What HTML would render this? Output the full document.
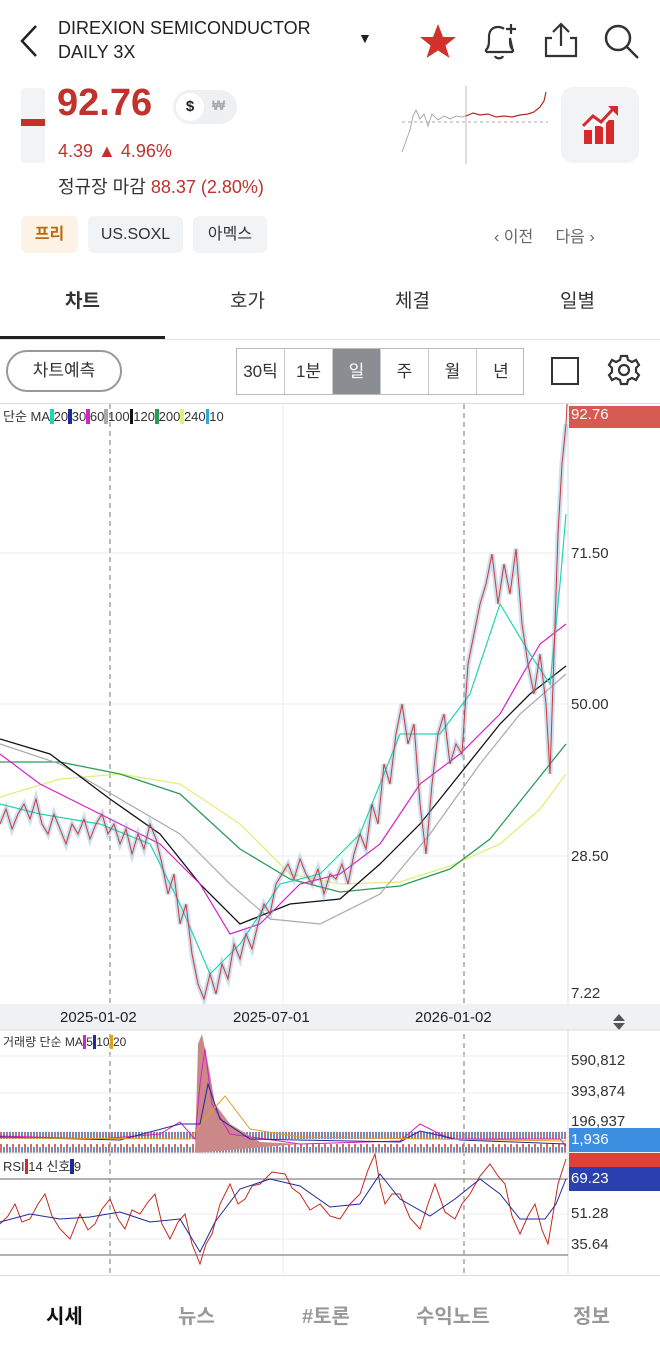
<!DOCTYPE html>
<html><head><meta charset="utf-8"><style>
*{margin:0;padding:0;box-sizing:border-box}
body{width:660px;height:1355px;background:#fff;font-family:"Liberation Sans","Noto Sans CJK KR",sans-serif;color:#222;position:relative;overflow:hidden}
.a{position:absolute}
.red{color:#c2312c}
.chip{position:absolute;top:216px;height:37px;border-radius:6px;background:#f2f3f5;font-size:16px;line-height:37px;text-align:center;color:#333}
.tab{position:absolute;top:286px;font-size:19px;font-weight:bold;color:#333;width:165px;text-align:center}
.tb{position:absolute;top:349px;height:45px;width:48px;text-align:center;line-height:45px;font-size:17px;color:#333;border-right:1px solid #ccc}
.pl{position:absolute;left:571px;font-size:15px;color:#333}
.nav{position:absolute;top:1300px;font-size:20px;color:#999;font-weight:bold}
</style></head><body>
<svg class="a" style="left:18px;top:24px" width="22" height="34"><path d="M18 2 L4 17 L18 32" fill="none" stroke="#222" stroke-width="2.5"/></svg>
<div class="a" style="left:58px;top:16px;font-size:18px;line-height:24px;color:#222">DIREXION SEMICONDUCTOR<br>DAILY 3X</div>
<div class="a" style="left:358px;top:30px;font-size:14px">▼</div>
<svg class="a" style="left:418px;top:22px" width="40" height="38"><path d="M20 2 L25 15 L38 15 L27.5 23.5 L31.5 36 L20 28.5 L8.5 36 L12.5 23.5 L2 15 L15 15Z" fill="#d3312c"/></svg>
<svg class="a" style="left:480px;top:20px" width="40" height="42" fill="none" stroke="#333" stroke-width="2.2"><path d="M6 32 L6 30 C9 27 9 24 9 17 C9 10 13 7 18 7 C21 7 23 8 24 9 M30 18 C30 24 30 27 33 30 L33 32 Z M6 32 L33 32"/><path d="M15 36 C16 39 22 39 23 36"/><path d="M31 4 V14 M26 9 H36"/></svg>
<svg class="a" style="left:542px;top:20px" width="38" height="40" fill="none" stroke="#333" stroke-width="2.2"><path d="M19 4 V26 M11 12 L19 4 L27 12"/><path d="M10 18 H4 V36 H34 V18 H28"/></svg>
<svg class="a" style="left:602px;top:22px" width="40" height="40" fill="none" stroke="#333" stroke-width="2.5"><circle cx="16" cy="16" r="12"/><path d="M25 25 L36 36"/></svg>

<div class="a" style="left:21px;top:88px;width:24px;height:75px;background:#f2f3f5;border-radius:3px"></div>
<div class="a" style="left:21px;top:119px;width:24px;height:7px;background:#c2312c"></div>
<div class="a red" style="left:57px;top:82px;font-size:38px;font-weight:bold">92.76</div>
<div class="a" style="left:173px;top:90px;width:64px;height:34px;border-radius:17px;background:#eef0f2"></div>
<div class="a" style="left:176px;top:93px;width:28px;height:28px;border-radius:14px;background:#fff;text-align:center;line-height:28px;font-size:15px;font-weight:bold">$</div>
<div class="a" style="left:212px;top:97px;font-size:14px;color:#aaa;font-weight:bold">₩</div>
<div class="a red" style="left:58px;top:141px;font-size:18px">4.39 ▲ 4.96%</div>
<div class="a" style="left:58px;top:173px;font-size:18px;color:#333">정규장 마감 <span class="red">88.37 (2.80%)</span></div>
<svg class="a" style="left:398px;top:86px" width="154" height="80">
<line x1="4" y1="36" x2="150" y2="36" stroke="#aaa" stroke-dasharray="3,3"/>
<line x1="68" y1="0" x2="68" y2="78" stroke="#bbb"/>
<polyline fill="none" stroke="#aaa" stroke-width="1" points="4,66 8,55 12,44 15,30 18,24 22,33 26,28 30,40 34,28 40,34 46,30 52,33 58,30 64,31 68,30"/>
<polyline fill="none" stroke="#b22a25" stroke-width="1.2" points="68,30 75,27 82,29 90,28 98,31 106,30 114,31 122,29 130,28 136,26 142,21 146,15 148,6"/>
</svg>
<div class="a" style="left:561px;top:87px;width:78px;height:76px;border-radius:12px;background:#f2f3f5"></div>
<svg class="a" style="left:582px;top:106px" width="38" height="38"><rect x="2" y="24" width="8" height="14" fill="#d7282a"/><rect x="13" y="20" width="8" height="18" fill="#d7282a"/><rect x="24" y="14" width="8" height="24" fill="#d7282a"/><path d="M2 22 L12 12 L20 18 L32 4" fill="none" stroke="#fff" stroke-width="5"/><path d="M1 20 L11 10 L19 16 L31 3" fill="none" stroke="#d7282a" stroke-width="3"/><path d="M26 0 H36 V10Z" fill="#d7282a"/></svg>

<div class="chip" style="left:21px;width:57px;background:#fcf3e6;color:#c06a10;font-weight:bold">프리</div>
<div class="chip" style="left:88px;width:95px">US.SOXL</div>
<div class="chip" style="left:193px;width:74px">아멕스</div>
<div class="a" style="left:494px;top:223px;font-size:16px;color:#666">‹ 이전&nbsp;&nbsp;&nbsp;&nbsp;&nbsp;다음 ›</div>

<div class="tab" style="left:0">차트</div>
<div class="tab" style="left:165px;font-weight:normal">호가</div>
<div class="tab" style="left:330px;font-weight:normal">체결</div>
<div class="tab" style="left:495px;font-weight:normal">일별</div>
<div class="a" style="left:0;top:336px;width:165px;height:3px;background:#222"></div>
<div class="a" style="left:0;top:339px;width:660px;height:1px;background:#e2e2e2"></div>

<div class="a" style="left:6px;top:350px;width:116px;height:42px;border:2px solid #999;border-radius:21px;text-align:center;line-height:38px;font-size:17px;color:#333">차트예측</div>
<div class="a" style="left:236px;top:348px;width:288px;height:47px;border:1px solid #bbb"></div>
<div class="tb" style="left:237px">30틱</div>
<div class="tb" style="left:285px">1분</div>
<div class="tb" style="left:333px;background:#8a8d92;color:#fff">일</div>
<div class="tb" style="left:381px">주</div>
<div class="tb" style="left:429px">월</div>
<div class="tb" style="left:477px;border-right:none">년</div>
<div class="a" style="left:551px;top:357px;width:28px;height:28px;border:2px solid #333"></div>
<svg class="a" style="left:607px;top:353px" width="34" height="34" fill="none" stroke="#333" stroke-width="2.2"><circle cx="17" cy="17" r="5"/><path d="M14 3 H20 L21 7 L25 9 L29 7 L32 12 L29 15 V19 L32 22 L29 27 L25 25 L21 27 L20 31 H14 L13 27 L9 25 L5 27 L2 22 L5 19 V15 L2 12 L5 7 L9 9 L13 7Z"/></svg>

<div class="a" style="left:0;top:403px;width:660px;height:1px;background:#ddd"></div>
<svg class="a" style="left:0;top:404px" width="660" height="872">
<defs><pattern id="vb" width="6" height="21" patternUnits="userSpaceOnUse"><rect x="0" y="5" width="2" height="16" fill="#d66a6a"/><rect x="3" y="8" width="2" height="13" fill="#4a9ad6"/></pattern></defs>
<g stroke="#eee"><line x1="0" y1="149" x2="568" y2="149"/><line x1="0" y1="300" x2="568" y2="300"/><line x1="0" y1="452" x2="568" y2="452"/><line x1="283" y1="0" x2="283" y2="870"/></g>
<line x1="568" y1="0" x2="568" y2="870" stroke="#ddd"/>
<g stroke="#777" stroke-dasharray="5,4"><line x1="110" y1="0" x2="110" y2="870"/><line x1="464" y1="0" x2="464" y2="870"/></g>
<polyline fill="none" stroke="#e4ec7a" stroke-width="1.3" points="0,393 60,375 120,370 180,380 240,420 290,470 340,480 400,478 450,462 500,440 540,405 566,370"/>
<polyline fill="none" stroke="#2a9c5a" stroke-width="1.3" points="0,358 60,358 120,370 180,390 240,445 290,475 340,488 400,482 450,465 490,435 530,385 566,340"/>
<polyline fill="none" stroke="#aaa" stroke-width="1.2" points="0,340 60,360 120,395 180,430 230,480 270,515 320,520 380,490 430,430 480,360 520,310 566,270"/>
<polyline fill="none" stroke="#111" stroke-width="1.3" points="0,335 50,350 110,395 160,430 200,480 240,520 290,500 340,495 380,460 420,420 460,370 500,320 530,290 566,262"/>
<polyline fill="none" stroke="#d620c8" stroke-width="1.2" points="0,350 40,380 100,410 160,440 200,480 230,530 260,520 300,480 340,470 380,440 420,380 460,350 500,310 540,240 566,220"/>
<polyline fill="none" stroke="#1fd6b0" stroke-width="1.2" points="0,400 40,410 100,420 150,440 180,500 210,570 240,540 280,480 320,470 360,430 400,330 440,330 470,290 500,200 530,250 550,280 560,180 566,110"/>
<polyline fill="none" stroke="#6aa6d8" stroke-width="5" stroke-opacity="0.35" points="0,420 6,405 12,425 18,410 24,400 30,415 36,395 42,420 48,430 54,410 60,425 66,440 72,420 78,430 84,415 90,435 96,420 102,410 108,430 114,420 120,440 126,425 132,450 138,430 144,445 150,420 156,435 162,460 168,490 174,470 180,520 186,500 192,550 198,580 204,595 210,570 216,590 222,560 228,575 234,540 240,555 246,530 252,545 258,520 264,500 270,510 276,480 282,470 288,460 294,475 300,455 306,470 312,480 318,465 324,490 330,470 336,475 342,460 348,480 354,450 360,430 366,445 372,400 378,420 384,360 390,380 396,330 402,300 408,340 414,320 420,400 426,450 432,380 438,330 444,310 450,360 456,340 462,350 468,260 474,230 480,200 486,180 492,150 498,200 504,160 510,190 516,145 522,220 528,260 534,290 540,250 546,300 550,370 554,250 558,130 562,60 566,20"/>
<polyline fill="none" stroke="#c83a36" stroke-width="1" points="0,420 6,405 12,425 18,410 24,400 30,415 36,395 42,420 48,430 54,410 60,425 66,440 72,420 78,430 84,415 90,435 96,420 102,410 108,430 114,420 120,440 126,425 132,450 138,430 144,445 150,420 156,435 162,460 168,490 174,470 180,520 186,500 192,550 198,580 204,595 210,570 216,590 222,560 228,575 234,540 240,555 246,530 252,545 258,520 264,500 270,510 276,480 282,470 288,460 294,475 300,455 306,470 312,480 318,465 324,490 330,470 336,475 342,460 348,480 354,450 360,430 366,445 372,400 378,420 384,360 390,380 396,330 402,300 408,340 414,320 420,400 426,450 432,380 438,330 444,310 450,360 456,340 462,350 468,260 474,230 480,200 486,180 492,150 498,200 504,160 510,190 516,145 522,220 528,260 534,290 540,250 546,300 550,370 554,250 558,130 562,60 566,20 567,0"/>
<rect x="0" y="600" width="660" height="26" fill="#f0f1f3"/>
<polygon points="613,617 619,610 625,617" fill="#555"/>
<polygon points="613,619 619,626 625,619" fill="#555"/>
<line x1="0" y1="626" x2="660" y2="626" stroke="#ddd"/>
<g stroke="#eee"><line x1="0" y1="652" x2="568" y2="652"/><line x1="0" y1="689" x2="568" y2="689"/><line x1="0" y1="728" x2="568" y2="728"/></g>
<rect x="0" y="728" width="566" height="21" fill="url(#vb)"/>
<polygon points="195,749 198,640 202,630 206,650 210,670 215,700 230,720 260,738 300,740 195,749" fill="#c88"/>
<polyline fill="none" stroke="#d620c8" stroke-width="1" points="0,732 100,735 160,730 180,718 195,735 200,680 205,645 212,700 230,730 300,740 400,737 420,720 450,735 560,735 566,742"/>
<polyline fill="none" stroke="#1c2a9c" stroke-width="1" points="0,733 120,736 180,720 200,720 208,680 220,715 250,735 400,738 420,727 460,736 566,740"/>
<polyline fill="none" stroke="#e0a020" stroke-width="1" points="0,734 190,735 205,715 225,692 250,725 300,733 566,737"/>
<line x1="0" y1="749" x2="660" y2="749" stroke="#ddd"/>
<g stroke="#999" stroke-width="1.5"><line x1="0" y1="775" x2="568" y2="775"/><line x1="0" y1="851" x2="568" y2="851"/></g>
<g stroke="#eee"><line x1="0" y1="810" x2="568" y2="810"/><line x1="0" y1="835" x2="568" y2="835"/></g>
<polyline fill="none" stroke="#c42a20" stroke-width="1" points="0,820 8,812 15,800 22,818 30,815 38,800 45,790 52,812 60,825 70,835 80,810 88,826 95,820 102,805 110,795 118,815 125,825 132,806 140,810 148,798 155,790 162,820 170,835 178,818 185,810 192,840 200,860 206,840 212,830 220,800 230,780 238,800 245,795 252,782 260,780 272,768 285,770 292,784 300,790 310,806 320,800 330,812 340,815 350,800 360,790 368,766 375,750 380,780 385,800 392,790 400,790 410,814 420,825 428,800 435,780 445,808 455,815 462,800 470,790 480,772 490,760 498,772 505,780 512,812 520,830 528,812 535,800 542,826 548,840 553,810 558,780 566,755"/>
<polyline fill="none" stroke="#1c2a9c" stroke-width="1" points="0,818 30,810 60,815 90,813 120,808 150,818 180,815 200,848 215,818 240,785 270,775 300,782 330,803 360,800 380,770 400,795 430,812 455,795 480,775 500,790 520,815 545,815 556,800 566,775"/>
</svg>

<div class="a" style="left:3px;top:406px;font-size:13px;color:#333">단순 MA<span style="background:#1fd6b0">&nbsp;</span>20<span style="background:#1c2a9c">&nbsp;</span>30<span style="background:#d620c8">&nbsp;</span>60<span style="background:#aaa">&nbsp;</span>100<span style="background:#111">&nbsp;</span>120<span style="background:#2a9c5a">&nbsp;</span>200<span style="background:#e4ec7a">&nbsp;</span>240<span style="background:#2fa8e0">&nbsp;</span>10</div>
<div class="a" style="left:569px;top:406px;width:91px;height:22px;background:#d65a52;color:#fff;font-size:15px;padding-left:2px">92.76</div>
<div class="pl" style="top:545px">71.50</div>
<div class="pl" style="top:696px">50.00</div>
<div class="pl" style="top:848px">28.50</div>
<div class="pl" style="top:985px">7.22</div>
<div class="a" style="left:60px;top:1009px;font-size:15px">2025-01-02</div>
<div class="a" style="left:233px;top:1009px;font-size:15px">2025-07-01</div>
<div class="a" style="left:415px;top:1009px;font-size:15px">2026-01-02</div>
<div class="a" style="left:3px;top:1033px;font-size:12px;color:#333">거래량 단순 MA<span style="background:#d620c8">&nbsp;</span>5<span style="background:#1c2a9c">&nbsp;</span>10<span style="background:#e0a020">&nbsp;</span>20</div>
<div class="pl" style="top:1052px">590,812</div>
<div class="pl" style="top:1083px">393,874</div>
<div class="pl" style="top:1113px">196,937</div>
<div class="a" style="left:569px;top:1128px;width:91px;height:24px;background:#3b8ee0;color:#fff;font-size:15px;padding-left:2px;line-height:24px">1,936</div>
<div class="a" style="left:3px;top:1156px;font-size:13px;color:#333">RSI<span style="background:#d7282a">&nbsp;</span>14 신호<span style="background:#1c2a9c">&nbsp;</span>9</div>
<div class="a" style="left:569px;top:1153px;width:91px;height:14px;background:#e04038"></div>
<div class="a" style="left:569px;top:1167px;width:91px;height:24px;background:#2a3fb0;color:#fff;font-size:15px;padding-left:2px;line-height:24px">69.23</div>
<div class="pl" style="top:1205px">51.28</div>
<div class="pl" style="top:1236px">35.64</div>
<div class="a" style="left:0;top:1275px;width:660px;height:1px;background:#ddd"></div>

<div class="nav" style="left:46px;color:#111">시세</div>
<div class="nav" style="left:178px">뉴스</div>
<div class="nav" style="left:302px">#토론</div>
<div class="nav" style="left:416px">수익노트</div>
<div class="nav" style="left:573px">정보</div>
</body></html>
